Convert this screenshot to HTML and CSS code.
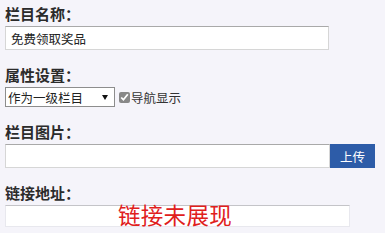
FILE: index.html
```html
<!DOCTYPE html>
<html lang="zh-CN">
<head>
    <meta charset="UTF-8">
    <title>栏目设置</title>
    <link rel="stylesheet" href="styles.css">
</head>
<body>
    <form class="column-form">
        <div class="field">
            <label>栏目名称：</label>
            <input type="text" class="text-input" value="免费领取奖品">
        </div>

        <div class="field">
            <label>属性设置：</label>
            <div class="attr-row">
                <span class="select-wrap">
                    <select class="level-select">
                        <option>作为一级栏目</option>
                        <option>作为二级栏目</option>
                    </select>
                </span>
                <label class="check"><input type="checkbox" checked>导航显示</label>
            </div>
        </div>

        <div class="field">
            <label>栏目图片：</label>
            <div class="upload-row">
                <input type="text" class="text-input upload-input">
                <button type="button" class="upload-btn">上传</button>
            </div>
        </div>

        <div class="field link-field">
            <label>链接地址：</label>
            <input type="text" class="text-input link-input">
            <span class="note">链接未展现</span>
        </div>
    </form>
</body>
</html>
```

FILE: styles.css
```css
* { margin: 0; padding: 0; box-sizing: border-box; }
body {
    background: #f5f4fa;
    color: #333;
    font-family: "Noto Sans CJK SC", "Liberation Sans", sans-serif;
    padding: 4px 5px 0;
}
.field {
    margin-bottom: 15px;
}
.field > label {
    display: block;
    font-size: 15px;
    font-weight: 700;
    line-height: 20px;
    margin-bottom: 2px;
    color: #2b2b2b;
}
.text-input {
    display: block;
    width: 324px;
    height: 24px;
    padding: 0 5px;
    background: #fff;
    border: 1px solid #d6d6d6;
    border-top-color: #a9a9a9;
    font-family: inherit;
    font-size: 12.5px;
    color: #222;
    outline: none;
}
.attr-row {
    display: flex;
    align-items: center;
    gap: 4px;
}
.select-wrap {
    position: relative;
    display: block;
}
.select-wrap::after {
    content: "";
    position: absolute;
    right: 7px;
    top: 8px;
    border-left: 3px solid transparent;
    border-right: 3px solid transparent;
    border-top: 5px solid #111;
    pointer-events: none;
}
.level-select {
    appearance: none;
    -webkit-appearance: none;
    display: block;
    width: 110px;
    height: 20px;
    padding: 0 2px;
    background: #fff;
    border: 1px solid #8d8d8d;
    border-radius: 0;
    font-family: inherit;
    font-size: 12.5px;
    color: #222;
}
.check {
    display: flex;
    align-items: center;
    font-size: 12.5px;
    color: #333;
}
.check input {
    width: 11px;
    height: 11px;
    margin: 0 1px 0 0;
    accent-color: #888;
}
.upload-row {
    display: flex;
}
.upload-input {
    width: 325px;
}
.upload-btn {
    width: 45px;
    height: 24px;
    background: #2d5ca8;
    color: #fff;
    border: none;
    font-family: inherit;
    font-size: 12.5px;
}
.link-field {
    position: relative;
}
.link-input {
    width: 345px;
    height: 22px;
    border-color: #e8e8ee;
    border-top-color: #c4c4c8;
}
.note {
    position: absolute;
    left: 113px;
    top: 17px;
    font-size: 22.5px;
    line-height: 28px;
    color: #e0201c;
    letter-spacing: 0.3px;
}
```
